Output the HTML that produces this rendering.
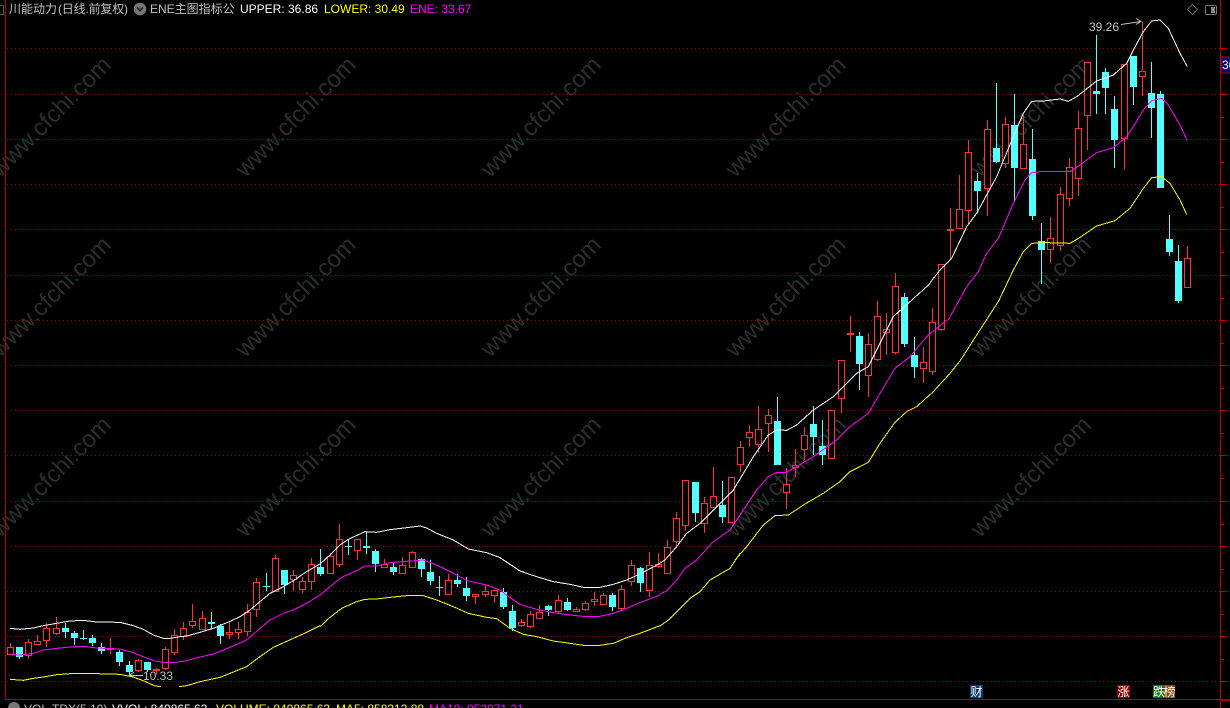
<!DOCTYPE html>
<html><head><meta charset="utf-8"><title>ENE</title>
<style>
html,body{margin:0;padding:0;background:#000;width:1230px;height:708px;overflow:hidden}
svg{position:absolute;left:0;top:0;display:block}
.wm text{font:24px "Liberation Sans",sans-serif;fill:#2d2d2d;text-anchor:middle;dominant-baseline:central}
.l{fill:none;stroke-width:1;vector-effect:non-scaling-stroke;shape-rendering:crispEdges}
.t{font-family:"Liberation Sans","Noto Sans CJK SC",sans-serif;font-size:12px}
.b{font:12px "Noto Sans CJK SC",sans-serif;fill:#fff;text-anchor:middle}
</style></head><body>
<svg width="1230" height="708" viewBox="0 0 1230 708" xmlns="http://www.w3.org/2000/svg">
<g class="wm">
<text transform="translate(51,117) rotate(-45)">www.cfchi.com</text><text transform="translate(296,117) rotate(-45)">www.cfchi.com</text><text transform="translate(541,117) rotate(-45)">www.cfchi.com</text><text transform="translate(786,117) rotate(-45)">www.cfchi.com</text><text transform="translate(1031,117) rotate(-45)">www.cfchi.com</text>
<text transform="translate(51,297) rotate(-45)">www.cfchi.com</text><text transform="translate(296,297) rotate(-45)">www.cfchi.com</text><text transform="translate(541,297) rotate(-45)">www.cfchi.com</text><text transform="translate(786,297) rotate(-45)">www.cfchi.com</text><text transform="translate(1031,297) rotate(-45)">www.cfchi.com</text>
<text transform="translate(51,477) rotate(-45)">www.cfchi.com</text><text transform="translate(296,477) rotate(-45)">www.cfchi.com</text><text transform="translate(541,477) rotate(-45)">www.cfchi.com</text><text transform="translate(786,477) rotate(-45)">www.cfchi.com</text><text transform="translate(1031,477) rotate(-45)">www.cfchi.com</text>
</g>
<path d="M7 48.5H1220M7 94.5H1220M7 139.5H1220M7 184.5H1220M7 229.5H1220M7 275.5H1220M7 320.5H1220M7 365.5H1220M7 410.5H1220M7 455.5H1220M7 501.5H1220M7 546.5H1220M7 591.5H1220M7 636.5H1220M7 681.5H1220" stroke="#a00000" stroke-dasharray="1 3" fill="none"/>
<path d="M5.5 0V700M1220.5 0V708M5 699.5H1230M1220 48.5h7M1220 94.5h7M1220 117.5h4M1220 139.5h7M1220 162.5h4M1220 184.5h7M1220 207.5h4M1220 229.5h7M1220 252.5h4M1220 275.5h7M1220 298.5h4M1220 320.5h7M1220 343.5h4M1220 365.5h7M1220 388.5h4M1220 410.5h7M1220 433.5h4M1220 455.5h7M1220 478.5h4M1220 501.5h7M1220 524.5h4M1220 546.5h7M1220 569.5h4M1220 591.5h7M1220 614.5h4M1220 636.5h7M1220 659.5h4M1220 681.5h7M1221 699.5h9M1221 700.5h9" stroke="#b40000" fill="none"/>
<path d="M1221 57h9v16h-9z" fill="#00007c" stroke="#b40000"/>
<text x="1222" y="69" class="t" fill="#fff" font-size="12">36</text>

<!-- cyan candles -->
<path stroke="#54ffff" fill="none" d="M19.5 647V659M65.5 623V638M74.5 631V645M83.5 630V640M92.5 635V646M101.5 643V654M119.5 650V666M129.5 661V676M147.5 662V672M211.5 612V629M220.5 624V644M266.5 573V591M284.5 570V594M320.5 549V576M348.5 539V555M366.5 532V554M375.5 549V572M393.5 562V575M421.5 558V577M430.5 560V585M439.5 576V596M457.5 574V587M466.5 577V601M503.5 588V609M512.5 605V631M548.5 605V616M567.5 598V611M612.5 593V611M640.5 567V592M695.5 482V522M722.5 481V523M777.5 397V465M813.5 406V455M822.5 420V465M859.5 332V390M904.5 293V347M914.5 337V378M977.5 173V213M996.5 83V163M1014.5 94V202M1032.5 129V220M1041.5 223V284M1096.5 35V114M1105.5 68V114M1114.5 96V168M1133.5 56V105M1151.5 62V138M1160.5 91V188M1169.5 215V256M1178.5 245V303"/>
<path fill="#54ffff" d="M16 647h7v10h-7zM62 628h7v4h-7zM71 633h7v5h-7zM80 638h7v1h-7zM89 638h7v5h-7zM98 647h7v4h-7zM116 652h7v10h-7zM126 665h7v7h-7zM144 662h7v8h-7zM208 622h7v2h-7zM217 626h7v10h-7zM263 586h7v1h-7zM281 570h7v15h-7zM317 567h7v7h-7zM345 546h7v1h-7zM363 546h7v2h-7zM372 551h7v13h-7zM390 567h7v5h-7zM418 559h7v10h-7zM427 572h7v9h-7zM436 587h7v1h-7zM454 580h7v4h-7zM463 588h7v8h-7zM500 592h7v15h-7zM509 611h7v17h-7zM545 606h7v4h-7zM564 602h7v8h-7zM609 595h7v12h-7zM637 568h7v15h-7zM692 482h7v31h-7zM719 505h7v12h-7zM774 421h7v44h-7zM810 424h7v13h-7zM819 446h7v9h-7zM856 336h7v28h-7zM901 297h7v47h-7zM911 355h7v12h-7zM974 181h7v10h-7zM993 148h7v14h-7zM1011 125h7v43h-7zM1029 159h7v57h-7zM1038 241h7v9h-7zM1093 91h7v3h-7zM1102 72h7v16h-7zM1111 109h7v31h-7zM1130 56h7v31h-7zM1148 93h7v15h-7zM1157 94h7v94h-7zM1166 239h7v13h-7zM1175 261h7v40h-7z"/>

<!-- red candles -->
<path stroke="#ff3232" fill="none" d="M10.5 643V654M28.5 639V659M37.5 635V645M46.5 623V647M56.5 617V635M110.5 638V654M138.5 659V672M156.5 668V675M165.5 647V670M174.5 629V655M183.5 622V640M192.5 604V628M202.5 611V630M229.5 621V639M238.5 622V639M247.5 604V636M256.5 578V617M275.5 555V592M293.5 570V591M302.5 577V593M311.5 558V590M330.5 553V574M339.5 524V567M357.5 539V560M384.5 559V568M402.5 557V573M412.5 551V568M448.5 574V595M475.5 594V604M485.5 585V597M494.5 590V603M521.5 619V627M530.5 611V628M539.5 605V619M558.5 595V614M576.5 607V612M585.5 601V611M594.5 592V606M603.5 593V605M621.5 585V611M631.5 560V586M649.5 552V597M658.5 553V568M667.5 540V574M676.5 512V548M685.5 480V531M704.5 497V533M713.5 467V508M731.5 477V523M740.5 441V472M749.5 425V447M758.5 406V453M768.5 409V452M786.5 468V509M795.5 449V477M804.5 427V460M831.5 410V459M841.5 360V413M850.5 316V352M868.5 333V397M877.5 301V361M886.5 313V355M895.5 273V354M923.5 347V383M932.5 308V375M941.5 264V331M950.5 208V259M959.5 175V228M968.5 140V224M987.5 120V216M1005.5 117V168M1023.5 115V168M1050.5 217V263M1060.5 187V251M1069.5 158V206M1078.5 111V196M1087.5 62V150M1124.5 64V169M1142.5 22V96M1187.5 246V287"/>
<path stroke="#ff3232" fill="#000" d="M7.5 647.5h6v7h-6zM25.5 642.5h6v13h-6zM34.5 641.5h6v3h-6zM43.5 628.5h6v12h-6zM53.5 628.5h6v5h-6zM107.5 648.5h6v1h-6zM135.5 660.5h6v10h-6zM153.5 669.5h6v1h-6zM162.5 649.5h6v19h-6zM171.5 635.5h6v17h-6zM180.5 628.5h6v8h-6zM189.5 621.5h6v4h-6zM199.5 618.5h6v11h-6zM226.5 632.5h6v2h-6zM235.5 629.5h6v3h-6zM244.5 612.5h6v19h-6zM253.5 582.5h6v27h-6zM272.5 558.5h6v33h-6zM290.5 575.5h6v4h-6zM299.5 581.5h6v8h-6zM308.5 564.5h6v17h-6zM327.5 556.5h6v17h-6zM336.5 539.5h6v25h-6zM354.5 539.5h6v11h-6zM381.5 564.5h6v3h-6zM399.5 565.5h6v8h-6zM409.5 552.5h6v15h-6zM445.5 580.5h6v14h-6zM472.5 594.5h6v2h-6zM482.5 591.5h6v3h-6zM491.5 590.5h6v5h-6zM518.5 622.5h6v3h-6zM527.5 614.5h6v12h-6zM536.5 612.5h6v6h-6zM555.5 600.5h6v11h-6zM573.5 609.5h6v2h-6zM582.5 603.5h6v6h-6zM591.5 599.5h6v2h-6zM600.5 595.5h6v9h-6zM618.5 589.5h6v19h-6zM628.5 565.5h6v16h-6zM646.5 565.5h6v25h-6zM655.5 564.5h6v2h-6zM664.5 547.5h6v26h-6zM673.5 518.5h6v23h-6zM682.5 480.5h6v45h-6zM701.5 503.5h6v20h-6zM710.5 496.5h6v11h-6zM728.5 477.5h6v45h-6zM737.5 447.5h6v17h-6zM746.5 432.5h6v5h-6zM755.5 429.5h6v15h-6zM765.5 415.5h6v8h-6zM783.5 484.5h6v8h-6zM792.5 465.5h6v2h-6zM801.5 435.5h6v14h-6zM828.5 410.5h6v48h-6zM838.5 360.5h6v38h-6zM847.5 333.5h6v1h-6zM865.5 344.5h6v31h-6zM874.5 316.5h6v43h-6zM883.5 329.5h6v3h-6zM892.5 286.5h6v66h-6zM920.5 362.5h6v6h-6zM929.5 322.5h6v49h-6zM938.5 264.5h6v65h-6zM947.5 229.5h6v1h-6zM956.5 209.5h6v19h-6zM965.5 152.5h6v58h-6zM984.5 129.5h6v59h-6zM1002.5 124.5h6v39h-6zM1020.5 144.5h6v24h-6zM1047.5 238.5h6v11h-6zM1057.5 194.5h6v51h-6zM1066.5 167.5h6v31h-6zM1075.5 128.5h6v50h-6zM1084.5 62.5h6v53h-6zM1121.5 64.5h6v74h-6zM1139.5 71.5h6v5h-6zM1184.5 258.5h6v29h-6z"/>

<!-- lines -->
<g transform="translate(0,560) scale(.33333)"><polyline class="l" stroke="#fff" points="30,205 60,208 100,204 130,197 170,190 210,183 250,181 290,186 360,187 400,197 430,208 460,225 490,235 510,235 540,230 560,228 600,217 640,205 690,184 720,170 750,150 780,125 810,100 850,80 880,62 920,35 960,12"/>
<polyline class="l" stroke="#f0f" points="30,283 60,285 100,280 130,270 170,265 210,261 250,259 290,264 360,267 400,278 430,290 465,303 490,307 530,307 560,302 600,291 640,282 690,262 740,240 780,205 810,180 850,160 880,150 920,130 960,105"/>
<polyline class="l" stroke="#ff0" points="30,358 70,361 100,355 130,351 170,344 210,341 290,341 360,343 395,350 430,362 465,378 483,380"/>
<polyline class="l" stroke="#ff0" points="537,380 560,377 600,365 660,352 690,340 740,320 780,290 820,262 880,235 920,217 960,197"/></g>
<g transform="translate(320,500) scale(.33333)"><polyline class="l" stroke="#fff" points="0,192 30,165 60,135 85,118 135,95 170,97 210,89 260,83 300,78 320,84 350,100 400,120 445,147 500,158 540,173 600,213 650,230 700,245 750,253 790,262 840,262 880,253 920,240 960,222 1020,190"/>
<polyline class="l" stroke="#f0f" points="0,286 30,260 65,232 110,212 135,198 170,198 210,188 260,184 310,180 350,195 400,220 445,243 500,255 540,270 570,293 600,313 650,328 700,338 750,345 790,349 840,349 880,340 920,325 960,308 1020,285"/>
<polyline class="l" stroke="#ff0" points="0,380 30,352 65,325 110,305 135,298 170,297 210,292 260,287 310,287 350,300 400,320 445,340 500,352 530,356 570,385 610,403 650,410 700,423 750,430 790,436 840,436 880,430 920,413 960,400 1020,377"/></g>
<g transform="translate(630,510) scale(.33333)"><polyline class="l" stroke="#f0f" points="90,252 110,243 140,210 165,175 200,150"/>
<polyline class="l" stroke="#ff0" points="90,348 118,328 150,295 180,265 210,245 240,210 300,175 330,130"/></g>
<g transform="translate(640,260) scale(.33333)"><polyline class="l" stroke="#fff" points="60,909 75,900 110,860 140,820 180,790 220,750 280,690 310,640 340,590 385,525 410,510 440,511 470,495 520,450 580,410 620,370 650,340 685,320 720,250 760,170 810,125 860,80 870,70"/>
<polyline class="l" stroke="#f0f" points="165,905 170,900 220,845 270,810 310,750 350,690 385,650 410,637 440,637 470,620 520,590 590,540 630,500 685,460 720,400 765,325 810,290 860,230 920,180"/>
<polyline class="l" stroke="#ff0" points="285,900 320,860 370,795 405,767 445,765 490,735 550,700 600,665 630,635 685,607 720,550 765,487 800,455 830,440 880,395 930,340 960,303 1041,177"/></g>
<g transform="translate(930,0) scale(.33333)"><polyline class="l" stroke="#fff" points="0,848 30,810 65,775 110,680 140,640 200,530 250,410 280,340 305,304 340,303 390,297 415,304 440,290 500,243 550,225 590,190 610,150 640,95 665,63 690,60 715,85 750,160 772,200"/>
<polyline class="l" stroke="#f0f" points="55,960 110,860 145,815 170,760 205,715 250,610 285,540 305,518 340,514 420,515 450,495 500,458 550,443 590,410 610,380 640,330 665,302 695,295 715,315 750,375 772,422"/>
<polyline class="l" stroke="#ff0" points="170,958 205,905 250,810 280,755 305,730 350,728 420,730 450,712 500,678 555,662 600,625 640,565 665,533 695,530 720,550 750,600 770,643"/></g>

<!-- price labels -->
<text x="1089" y="31" class="t" fill="#c0c0c0">39.26</text>
<path d="M1121 24.5L1141 21.5M1136 18.5L1141 21.5L1136 24.5" stroke="#c0c0c0" fill="none"/>
<text x="143" y="680" class="t" fill="#c0c0c0">10.33</text>
<path d="M143 675.5H130M134 672.5L130 674.5L134 677.5" stroke="#c0c0c0" fill="none"/>

<!-- header -->
<path d="M0 5.5h3.5v9H0" stroke="#555" fill="none"/>
<text x="9" y="13" class="t" fill="#c0c0c0">川能动力</text>
<text x="58" y="13" class="t" fill="#c0c0c0" textLength="70">(日线.前复权)</text>
<circle cx="140" cy="9" r="6.3" fill="#777"/>
<path d="M137 7.5l3 3 3-3" stroke="#222" stroke-width="1.6" fill="none"/>
<text x="150" y="13" class="t" fill="#c0c0c0">ENE主图指标公</text>
<text x="240" y="13" class="t" fill="#fff">UPPER: 36.86</text>
<text x="324" y="13" class="t" fill="#ff0">LOWER: 30.49</text>
<text x="410" y="13" class="t" fill="#f0f">ENE: 33.67</text>

<!-- top right icons -->
<path d="M1192.5 4.5l5 5-5 5-5-5z" stroke="#6a6a6a" fill="none"/>
<rect x="1205.5" y="5.5" width="11" height="9" rx="1.5" stroke="#777" fill="none"/>
<rect x="1211" y="7" width="4" height="6" fill="#888"/>

<!-- bottom indicator -->
<circle cx="14" cy="708" r="6" fill="#777"/>
<text x="24" y="713" class="t" fill="#c0c0c0">VOL-TDX(5,10)</text>
<text x="112" y="713" class="t" fill="#fff">VVOL: 849865.63</text>
<text x="216" y="713" class="t" fill="#ff0">VOLUME: 849865.63</text>
<text x="336" y="713" class="t" fill="#ff0">MA5: 858313.88</text>
<text x="429" y="713" class="t" fill="#f0f">MA10: 952971.21</text>

<!-- badges -->
<rect x="970" y="685" width="13" height="13" fill="#0b3a78"/><text x="976.5" y="696" class="b">财</text>
<rect x="1117" y="685" width="13" height="13" fill="#8b0000"/><text x="1123.5" y="696" class="b">涨</text>
<rect x="1153" y="685" width="11" height="13" fill="#0a7a0a"/><rect x="1164" y="685" width="11" height="13" fill="#8b4a0a"/><text x="1159" y="696" class="b">跌</text><text x="1169.5" y="696" class="b">榜</text>
</svg>
</body></html>
